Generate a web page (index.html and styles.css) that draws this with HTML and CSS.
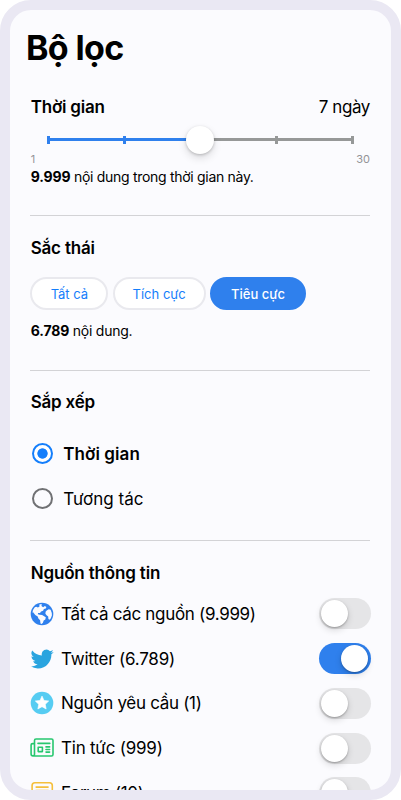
FILE: index.html
```html
<!DOCTYPE html>
<html lang="vi">
<head>
<meta charset="utf-8">
<title>Bộ lọc</title>
<link rel="stylesheet" href="styles.css">
</head>
<body>
<main class="phone">
  <h1 class="title">Bộ lọc</h1>

  <section class="section time">
    <div class="head"><h2>Thời gian</h2><span class="days">7 ngày</span></div>
    <div class="slider">
      <div class="track"><i></i><i></i><i></i><i class="off"></i><i class="off"></i></div>
      <div class="knob"></div>
    </div>
    <div class="range"><span>1</span><span>30</span></div>
    <p class="info"><b>9.999</b> nội dung trong thời gian này.</p>
  </section>

  <section class="section tone">
    <h2>Sắc thái</h2>
    <div class="pills">
      <button class="pill all">Tất cả</button>
      <button class="pill pos">Tích cực</button>
      <button class="pill neg">Tiêu cực</button>
    </div>
    <p class="info"><b>6.789</b> nội dung.</p>
  </section>

  <section class="section sort">
    <h2>Sắp xếp</h2>
    <div class="radios">
      <label class="option on"><span class="radio"></span><span class="name">Thời gian</span></label>
      <label class="option"><span class="radio"></span><span class="name">Tương tác</span></label>
    </div>
  </section>

  <section class="section sources">
    <h2>Nguồn thông tin</h2>
    <ul>
      <li>
        <svg class="icon" viewBox="0 0 24 24"><circle cx="12" cy="12" r="11.3" fill="#2f80ed"/><path fill="#fbfbfe" d="M9.3 2.5l2.4-.4-.2 2 1.6 1.2 1.8-1.4 1.5 1.1-.6 1.5-1.9.5-.8 1.7-2 .9-1.1 1.5-1.9-.1-.3 1.3 1.9.5 2.4.1 2 1.4 1.7 1-.5 2.1-1.6 1.2-.8 2.1-1.2 1.3-1.2-.6-.4-3.1-1.7-1.8-.7-2.1-2.4-1.5-2.2-2.7-.7.6.6-2.7 1.8-2.8 1.5-.5 1.6.8 1.6-1zM16.7 8.6l2.1-1.3 1.8.4 1.2 3.2.1 2.7-1.2 2.8-1.2 1.3-1.1-.8-.2-2.4-1.6-1.2-1.2-1.6.2-2z"/></svg>
        <span class="name n1">Tất cả các nguồn (9.999)</span><span class="switch"></span>
      </li>
      <li>
        <svg class="icon" viewBox="0 0 24 24"><path fill="#2aa4df" d="M23.6 4.9a9.6 9.6 0 0 1-2.7.75 4.7 4.7 0 0 0 2.1-2.6 9.4 9.4 0 0 1-3 1.15 4.7 4.7 0 0 0-8.1 4.3A13.4 13.4 0 0 1 2.2 3.6a4.7 4.7 0 0 0 1.45 6.3 4.7 4.7 0 0 1-2.13-.6v.06a4.7 4.7 0 0 0 3.8 4.6 4.7 4.7 0 0 1-2.1.1 4.7 4.7 0 0 0 4.4 3.3 9.5 9.5 0 0 1-7 1.95 13.4 13.4 0 0 0 7.25 2.1c8.7 0 13.5-7.2 13.5-13.5v-.6a9.6 9.6 0 0 0 2.3-2.4z"/></svg>
        <span class="name n2">Twitter (6.789)</span><span class="switch on"></span>
      </li>
      <li>
        <svg class="icon" viewBox="0 0 24 24"><circle cx="12" cy="12" r="11.3" fill="#56ccf2"/><path fill="#fff" stroke="#fff" stroke-width=".6" stroke-linejoin="round" d="m12 5.1 2 4.3 4.7.6-3.4 3.3.85 4.7L12 15.7 7.85 18l.85-4.7L5.3 10l4.7-.6z"/></svg>
        <span class="name n3">Nguồn yêu cầu (1)</span><span class="switch"></span>
      </li>
      <li>
        <svg class="icon" viewBox="0 0 24 24" fill="none" stroke="#27c76f" stroke-width="1.6" stroke-linecap="round" stroke-linejoin="round"><path d="M5.9 3h15.6A1.5 1.5 0 0 1 23 4.5v14a1.5 1.5 0 0 1-1.5 1.5H3a1.9 1.9 0 0 1-1.9-1.9v-9a1.5 1.5 0 0 1 1.5-1.5h1.8M4.5 18.1V4.5A1.5 1.5 0 0 1 6 3M4.5 18.1a1.6 1.6 0 0 1-1.6 1.8M8 7.4h11.8M16 10.9h3.6M16 13.5h3.6M16 16.1h3.6M8.2 11.2h4.2v4.4H8.2z"/></svg>
        <span class="name n4">Tin tức (999)</span><span class="switch"></span>
      </li>
      <li>
        <svg class="icon" viewBox="0 0 24 24" fill="none" stroke="#f5bf3b" stroke-width="1.6"><rect x="2.1" y="1.7" width="20.2" height="19" rx="2.8"/><path d="M5.6 6.1h13M5.6 9.5h13"/></svg>
        <span class="name n5">Forum (10)</span><span class="switch"></span>
      </li>
    </ul>
  </section>
</main>
</body>
</html>
```
FILE: styles.css
```css
* { box-sizing: border-box; margin: 0; padding: 0; }
body { background: #fff; font-family: Inter, sans-serif; color: #000; overflow: hidden; }
.phone {
  width: 401px;
  height: 800px;
  overflow: hidden;
  border: 10px solid #eae8f3;
  border-radius: 31px;
  background: #fbfbfe;
  padding: 0 20px;
}
.title { font-size: 34px; line-height: 40px; margin: 18px 0 0 -4px; font-weight: 700; letter-spacing: -.65px; }
.section { border-bottom: 1px solid #d3d3d6; width: 340px; padding-left: .7px; }
h2 { font-size: 17px; line-height: 24px; font-weight: 600; letter-spacing: -.2px; }
.time { padding-top: 27px; height: 148px; }
.head { display: flex; justify-content: space-between; }
.days { font-size: 17px; line-height: 24px; letter-spacing: -.4px; }
.slider { position: relative; height: 28px; margin-top: 6px; padding: 10px 16px 0; }
.track {
  display: flex;
  justify-content: space-between;
  height: 9px;
  background: linear-gradient(90deg, #2f80ed 50%, #969898 50%) center / 100% 3px no-repeat;
}
.track i { width: 3px; height: 8px; margin-top: .5px; background: #2f80ed; }
.track .off { background: #969898; }
.knob {
  position: absolute;
  left: 155.7px;
  top: .5px;
  width: 28px;
  height: 28px;
  border-radius: 50%;
  background: #fff;
  box-shadow: 0 1px 3px rgba(0, 0, 0, .2), 0 4px 8px rgba(0, 0, 0, .13);
}
.range { display: flex; justify-content: space-between; font-size: 11px; line-height: 12px; color: #939397; }
.info { font-size: 14px; line-height: 20px; letter-spacing: -.3px; margin-top: 2px; white-space: nowrap; }
.info b { font-weight: 700; letter-spacing: -.15px; }
.tone { padding-top: 20px; height: 155px; }
.pills { display: flex; gap: 4.3px; margin: 17px 0 0 -.3px; }
.pill {
  height: 33px;
  border: 2px solid #e9e9ee;
  border-radius: 17px;
  background: #fff;
  color: #147efb;
  font: 400 13px/20px Inter, sans-serif;
}
.all { width: 78px; }
.pos { width: 93px; }
.neg { width: 96px; background: #2f80ed; border-color: #2f80ed; color: #fff; font-weight: 500; }
.tone .info { margin-top: 11px; letter-spacing: -.24px; }
.sort { padding-top: 19px; height: 170px; }
.radios { margin-top: 17.5px; }
.option { display: flex; align-items: center; height: 44.7px; gap: 10.3px; font-size: 17px; padding-left: 1.3px; }
.option .name { letter-spacing: .02px; }
.on .name { font-weight: 600; letter-spacing: .08px; }
.radio { width: 21px; height: 21px; border: 2px solid #707174; border-radius: 50%; }
.on .radio { border-color: #147efb; background: radial-gradient(circle, #147efb 4.8px, #fff 5.5px); }
.sources { padding-top: 20px; border: 0; width: 341px; }
.sources h2 { letter-spacing: -.16px; }
.sources ul { list-style: none; margin-top: 6.5px; }
.sources li { display: flex; align-items: center; height: 44.75px; font-size: 17px; }
.icon { width: 24px; height: 24px; margin: 0 7.3px 0 -1px; flex: none; }
.sources .name { flex: 1; font-weight: 400; letter-spacing: -.31px; white-space: nowrap; }
.sources .n2 { letter-spacing: -.2px; }
.sources .n4 { letter-spacing: -.22px; }
.switch { width: 52px; height: 31px; padding: 2px; border-radius: 16px; background: #e5e5e7; flex: none; }
.switch::before {
  content: "";
  display: block;
  width: 27px;
  height: 27px;
  border-radius: 50%;
  background: #fff;
  box-shadow: 0 1px 2px rgba(0, 0, 0, .25), 0 3px 7px rgba(0, 0, 0, .15);
}
.switch.on { background: #2f80ed; }
.switch.on::before { margin-left: 20px; }
```
